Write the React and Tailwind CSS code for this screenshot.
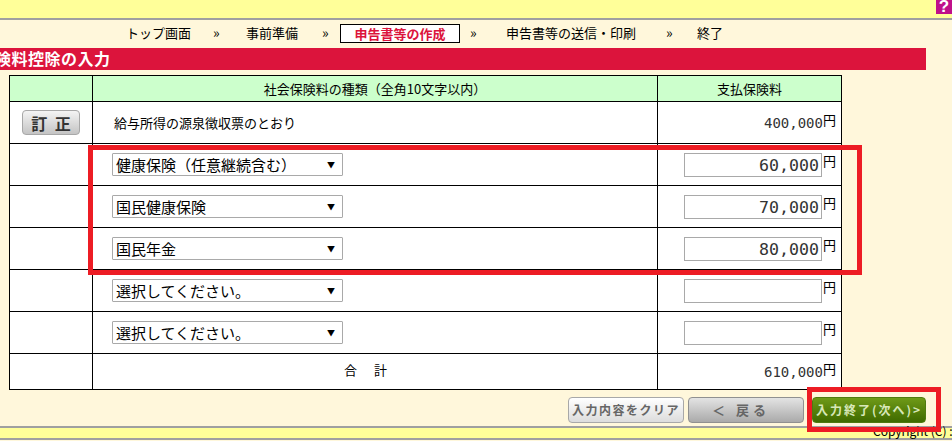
const jp = "font-['Noto_Sans_CJK_JP','Liberation_Sans',sans-serif]";
const num = "font-['DejaVu_Sans_Mono','Liberation_Mono',monospace]";

function Select({ label }) {
  return (
    <div className="flex items-center justify-between w-[231px] h-[23px] bg-white border border-[#a9a9a9] rounded-[1px] pl-[3px] pr-[7px]">
      <span className="text-[15px] leading-none text-black">{label}</span>
      <span className="text-[8px] leading-none text-black">▼</span>
    </div>
  );
}

function AmountInput({ value }) {
  return (
    <div className="flex items-start">
      <div className={`w-[138px] h-[24px] bg-white border border-[#a9a9a9] pr-[2px] text-right text-[16.6px] leading-[23px] text-[#333] ${num}`}>
        {value}
      </div>
      <span className="ml-[1px] text-[13px] leading-[16px]">円</span>
    </div>
  );
}

function Amount({ value }) {
  return (
    <div className="flex items-start justify-end pr-[5px]">
      <span className={`text-[14px] leading-[20px] mt-[1px] text-[#333] ${num}`}>{value}</span>
      <span className="text-[13px] leading-[16px]">円</span>
    </div>
  );
}

function ImgButton({ label, className }) {
  return (
    <div className={`flex items-center justify-center rounded-[4px] border font-bold ${className}`}>
      {label}
    </div>
  );
}

const rows = [
  { label: '健康保険（任意継続含む）', value: '60,000' },
  { label: '国民健康保険', value: '70,000' },
  { label: '国民年金', value: '80,000' },
  { label: '選択してください。', value: '' },
  { label: '選択してください。', value: '' },
];

export default function App() {
  return (
    <div className={`relative h-[441px] w-[952px] overflow-hidden bg-[#fff7db] text-black ${jp}`}>
      {/* top band */}
      <div className="flex justify-end h-[20px] bg-[#ffff99] border-b-2 border-[#a0a0a0]">
        <div className="flex items-center justify-center w-[16px] h-[14px] bg-[#c0108a] text-white text-[17px] leading-[14px] font-bold font-['Liberation_Sans',sans-serif]">?</div>
      </div>

      {/* steps */}
      <div className="flex items-start h-[28px] pt-[4px] pl-[126px] text-[13px] leading-[17px]">
        <span>トップ画面</span>
        <span className="ml-[22px] w-[9px] text-[14px]">»</span>
        <span className="ml-[24px]">事前準備</span>
        <span className="ml-[24px] w-[9px] text-[14px]">»</span>
        <span className="flex items-center justify-center ml-[9px] w-[120px] h-[19px] bg-white border border-black text-[#dc143c] font-bold">申告書等の作成</span>
        <span className="ml-[10px] w-[8px] text-[14px]">»</span>
        <span className="ml-[28px]">申告書等の送信・印刷</span>
        <span className="ml-[30px] w-[7px] text-[14px]">»</span>
        <span className="ml-[24px]">終了</span>
      </div>

      {/* title */}
      <div className="flex items-center w-[926px] h-[22px] pb-[2px] overflow-hidden bg-[#dc143c] text-white text-[16px] leading-none font-bold">
        <span className="whitespace-nowrap -ml-[5px] tracking-[0.5px]">険料控除の入力</span>
      </div>

      {/* table */}
      <table className="mt-[5px] ml-[9px] w-[832px] table-fixed border-collapse text-[13px]">
        <colgroup>
          <col className="w-[83px]" />
          <col className="w-[565px]" />
          <col className="w-[184px]" />
        </colgroup>
        <tbody>
          <tr className="h-[26px] bg-[#ccffcc] text-center">
            <td className="border border-black"></td>
            <td className="border border-black">社会保険料の種類（全角10文字以内）</td>
            <td className="border border-black">支払保険料</td>
          </tr>
          <tr className="h-[42px] bg-white">
            <td className="border border-black">
              <div className="flex justify-center">
                <ImgButton
                  label="訂 正"
                  className="w-[58px] h-[25px] pl-[2px] bg-gradient-to-b from-[#f4f4f4] to-[#c4c4c4] border-[#a8a8a8] text-[16px] tracking-[2px] text-[#333]"
                />
              </div>
            </td>
            <td className="border border-black pl-[21px]">給与所得の源泉徴収票のとおり</td>
            <td className="border border-black"><Amount value="400,000" /></td>
          </tr>
          {rows.map((row, i) => (
            <tr key={i} className="h-[42px] bg-white">
              <td className="border border-black"></td>
              <td className="border border-black pl-[19px]"><Select label={row.label} /></td>
              <td className="border border-black pl-[26px]"><AmountInput value={row.value} /></td>
            </tr>
          ))}
          <tr className="h-[36px] bg-white">
            <td className="border border-black"></td>
            <td className="border border-black text-center pb-[3px] pr-[17px] tracking-[2px]">合　計</td>
            <td className="border border-black"><Amount value="610,000" /></td>
          </tr>
        </tbody>
      </table>

      {/* buttons */}
      <div className="flex justify-end gap-[4px] mt-[7px] w-[926px] text-[12px] tracking-[1.5px] whitespace-nowrap">
        <ImgButton label="入力内容をクリア" className="w-[116px] h-[26px] bg-gradient-to-b from-white to-[#dcdcdc] border-[#a8a8a8] text-[#666]" />
        <ImgButton label="＜ 戻る" className="w-[116px] h-[26px] pr-[10px] bg-gradient-to-b from-[#e4e4e4] to-[#aaaaaa] border-[#909090] text-[#666] text-[13px] tracking-[4px] mr-[4px]" />
        <ImgButton label="入力終了(次へ)>" className="w-[114px] h-[26px] bg-gradient-to-b from-[#6f9a18] to-[#3f6a00] border-[#4f7a10] text-[#d8e8b8] tracking-[2px]" />
      </div>

      {/* footer band */}
      <div className="relative mt-[3px] h-[14px] bg-[#ffff99] border-y-2 border-[#a0a0a0]">
        <span className="absolute left-[873px] top-[-3px] text-[12px] leading-none whitespace-nowrap">Copyright (C) :</span>
      </div>

      {/* red annotation frames */}
      <div className="absolute left-[88px] top-[145px] w-[774px] h-[130px] border-[5px] border-[#ed1c24]"></div>
      <div className="absolute left-[807px] top-[387px] w-[134px] h-[45px] border-[5px] border-[#ed1c24]"></div>
    </div>
  );
}
